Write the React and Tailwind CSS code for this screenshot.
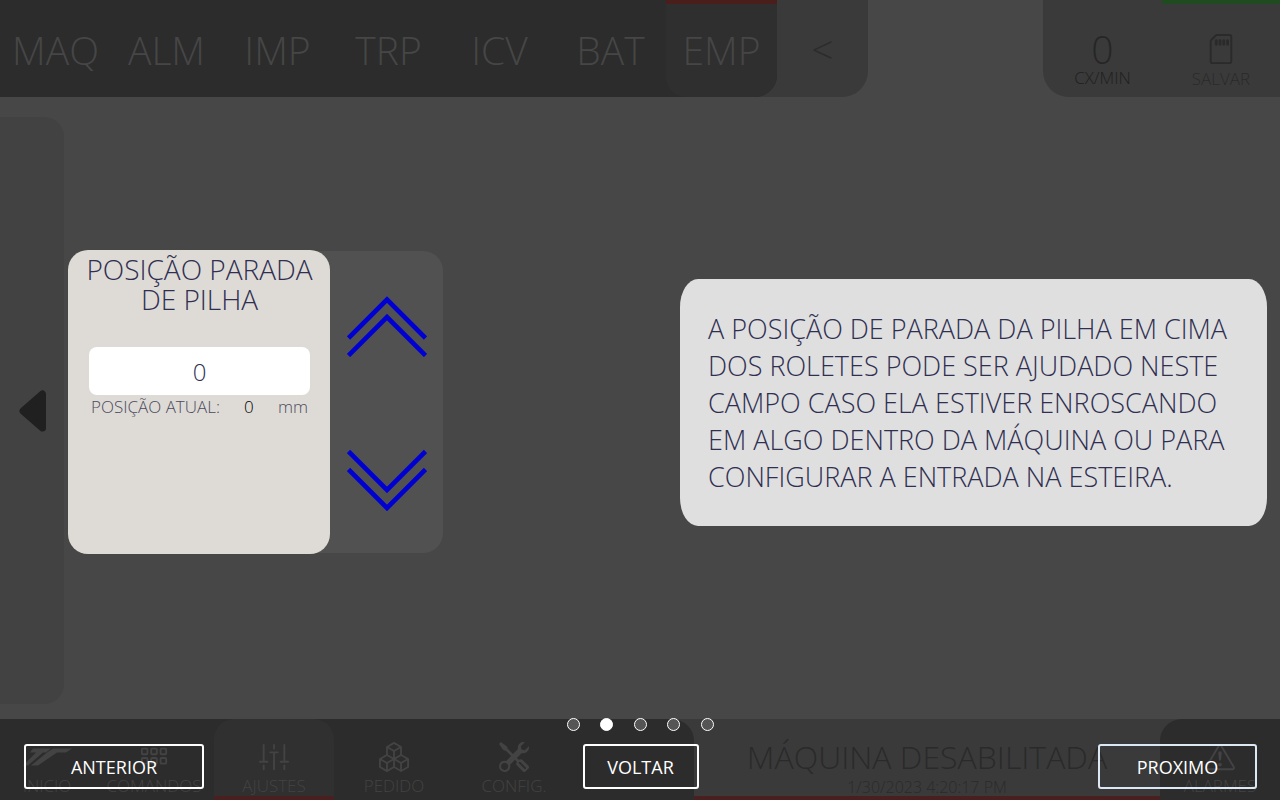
import React from "react";
import {
  BsBoxes,
  BsExclamationTriangle,
  BsGrid3X2Gap,
  BsSdCard,
  BsSliders2Vertical,
  BsTools,
} from "react-icons/bs";

const SECTIONS = ["MAQ", "ALM", "IMP", "TRP", "ICV", "BAT", "EMP"];
const STEPS = [1, 2, 3, 4, 5];

function Header() {
  return (
    <header className="flex h-[97px] items-stretch justify-between">
      <div className="flex rounded-br-[26px] bg-[#3a3a3a]">
        <nav className="flex overflow-hidden rounded-br-[22px] bg-[#2c2c2c]">
          {SECTIONS.map((name) => (
            <a
              key={name}
              href={"#" + name.toLowerCase()}
              className={
                "flex w-[111px] items-center justify-center border-t-4 pb-0.5 text-[39px] leading-none font-light text-[#464646] " +
                (name === "EMP"
                  ? "rounded-bl-[20px] border-[#4a1f1b] bg-[#2f2f2f]"
                  : "border-transparent")
              }
            >
              {name}
            </a>
          ))}
        </nav>
        <button
          type="button"
          className="w-[91px] text-[39px] leading-none font-light text-[#2c2c2c]"
        >
          &lt;
        </button>
      </div>
      <div className="flex w-[237px] rounded-bl-[26px] bg-[#3a3a3a] font-light text-[#262626]">
        <div className="flex w-[119px] flex-col items-center pt-[29px]">
          <span className="text-[39px] leading-10">0</span>
          <span className="text-[17px] leading-[18px] text-[#202020]">CX/MIN</span>
        </div>
        <button
          type="button"
          className="flex flex-1 flex-col items-center border-t-4 border-[#204a20] pt-[30px] text-[#2a2a2a]"
        >
          <BsSdCard size={30} aria-hidden="true" />
          <span className="mt-1 text-[17px] leading-[22px]">SALVAR</span>
        </button>
      </div>
    </header>
  );
}

function Chevrons({ down }) {
  return (
    <svg
      width="80"
      height="62"
      viewBox="0 0 80 62"
      fill="none"
      stroke="#0000d2"
      strokeWidth="4.6"
      aria-hidden="true"
    >
      {down ? (
        <path d="M1.500 2.500 40 41 78.500 2.500M1.500 20.500 40 59 78.500 20.500" />
      ) : (
        <path d="M1.500 43 40 4.500 78.500 43M1.500 60.500 40 22 78.500 60.500" />
      )}
    </svg>
  );
}

function PositionPanel() {
  return (
    <section className="flex items-center">
      <div className="relative z-10 h-[304px] w-[262px] rounded-[20px] bg-[#dedbd6] pt-1 pr-5 pl-[21px] text-[#2f2f52]">
        <h1 className="-mx-4 text-center text-[28px] leading-[30px] font-light">
          POSIÇÃO PARADA
          <br />
          DE PILHA
        </h1>
        <input
          type="text"
          defaultValue="0"
          aria-label="Posição parada de pilha"
          className="mt-[33px] h-12 w-full rounded-lg bg-white text-center text-2xl font-light outline-none"
        />
        <div className="flex justify-between px-0.5 text-[17px] leading-6 font-light text-[#4a4a60]">
          <span>POSIÇÃO ATUAL:</span>
          <span className="text-black">0</span>
          <span>mm</span>
        </div>
      </div>
      <div className="-ml-6 flex h-[302px] w-[137px] flex-col items-end justify-between rounded-r-[20px] bg-[#515151] pt-11 pr-4 pb-[42px]">
        <button type="button" aria-label="Aumentar">
          <Chevrons />
        </button>
        <button type="button" aria-label="Diminuir">
          <Chevrons down />
        </button>
      </div>
    </section>
  );
}

function FooterTab({ icon: Icon, label, active }) {
  return (
    <a
      href={"#" + label.toLowerCase()}
      className={
        "flex w-[120px] flex-col items-center border-b-4 pt-[23px] text-[17px] leading-5 font-light text-[#434343] " +
        (active
          ? "rounded-t-[20px] border-[#4a1f1f] bg-[#303030]"
          : "border-transparent")
      }
    >
      <Icon size={30} aria-hidden="true" />
      <span className="mt-1">{label}</span>
    </a>
  );
}

function Logo() {
  return (
    <svg width="50" height="20" viewBox="0 0 50 20" fill="currentColor" aria-hidden="true">
      <path d="M11 2.500h18l-5 4h-3L6 19.500H1L14 6.500H8zM31 2.500h19l-6 4h-9L16 19.500H9L25 6.500z" />
    </svg>
  );
}

function Footer() {
  return (
    <footer className="flex h-[81px] items-stretch bg-[#3a3a3a]">
      <nav className="flex w-[694px] overflow-hidden rounded-tr-[22px] bg-[#2c2c2c]">
        <a
          href="#inicio"
          className="flex w-[94px] flex-col items-center pt-[27px] text-[17px] leading-5 font-light text-[#434343]"
        >
          <Logo />
          <span className="mt-2.5">INICIO</span>
        </a>
        <FooterTab icon={BsGrid3X2Gap} label="COMANDOS" />
        <FooterTab icon={BsSliders2Vertical} label="AJUSTES" active />
        <FooterTab icon={BsBoxes} label="PEDIDO" />
        <FooterTab icon={BsTools} label="CONFIG." />
      </nav>
      <div className="flex flex-1 flex-col items-center border-b-4 border-[#4a1f1f] pt-4 font-light text-[#2a2a2a]">
        <span className="text-[32px] leading-[44px] whitespace-nowrap">MÁQUINA DESABILITADA</span>
        <span className="text-base leading-4 whitespace-nowrap">1/30/2023 4:20:17 PM</span>
      </div>
      <div className="bg-[#3a3a3a]">
        <div className="h-full rounded-tl-[22px] bg-[#2c2c2c]">
          <FooterTab icon={BsExclamationTriangle} label="ALARMES" />
        </div>
      </div>
    </footer>
  );
}

const stepButton = "h-[45px] rounded-[3px] border-2 text-lg leading-none text-white ";

function TourControls() {
  return (
    <div className="absolute inset-x-0 bottom-0 z-20 flex flex-col items-center gap-[13px] pb-[11px]">
      <div className="flex w-[147px] justify-between">
        {STEPS.map((step) => (
          <button
            key={step}
            type="button"
            aria-label={"Passo " + step}
            className={
              "size-[13px] rounded-full border border-white " +
              (step === 2 ? "bg-white" : "bg-[#555]")
            }
          />
        ))}
      </div>
      <div className="grid w-full grid-cols-[1fr_auto_1fr] pr-[23px] pl-6">
        <button type="button" className={stepButton + "w-[180px] border-white"}>
          ANTERIOR
        </button>
        <button type="button" className={stepButton + "w-[116px] border-white"}>
          VOLTAR
        </button>
        <button
          type="button"
          className={stepButton + "w-[159px] justify-self-end border-[#dde8f6]"}
        >
          PROXIMO
        </button>
      </div>
    </div>
  );
}

export default function App() {
  return (
    <div className="relative flex min-h-screen flex-col bg-[#474747] font-['Open_Sans',sans-serif]">
      <Header />
      <main className="flex flex-1 gap-1">
        <button
          type="button"
          aria-label="Recolher"
          className="mt-5 mb-[15px] flex w-16 items-center justify-center rounded-r-[20px] bg-[#424242] pl-0.5"
        >
          <svg width="28" height="42" viewBox="0 0 28 42" aria-hidden="true">
            <path
              d="M4 21 23.500 4v34z"
              fill="#202020"
              stroke="#202020"
              strokeWidth="7"
              strokeLinejoin="round"
            />
          </svg>
        </button>
        <div className="flex flex-1 items-center justify-between pr-[13px] pb-3">
          <PositionPanel />
          <p className="w-[587px] rounded-[18px/28px] bg-[#dfdfdf] px-7 py-[31px] text-[27px] leading-[37px] font-light text-[#2f2f52]">
            A POSIÇÃO DE PARADA DA PILHA EM CIMA DOS ROLETES PODE SER AJUDADO NESTE CAMPO CASO ELA
            ESTIVER ENROSCANDO EM ALGO DENTRO DA MÁQUINA OU PARA CONFIGURAR A ENTRADA NA ESTEIRA.
          </p>
        </div>
      </main>
      <Footer />
      <TourControls />
    </div>
  );
}
